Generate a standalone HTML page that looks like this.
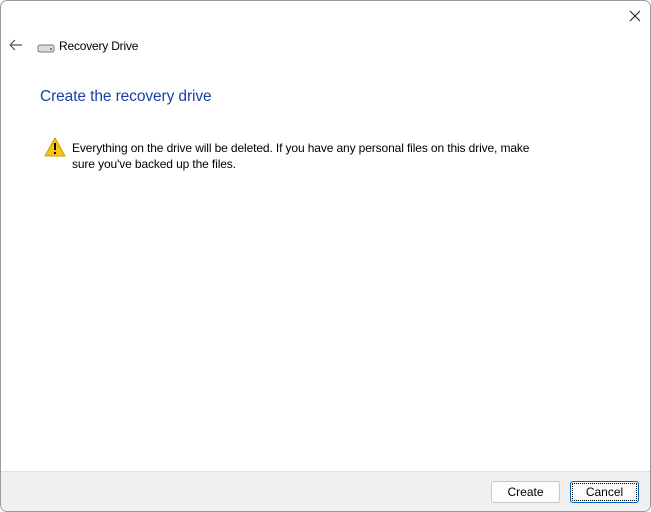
<!DOCTYPE html><html><head><style>
body{margin:0;width:651px;height:512px;overflow:hidden;background:#fff;font-family:"Liberation Sans",sans-serif;}
.win{position:absolute;left:0;top:0;width:649px;height:510px;border:1px solid #9a9a9a;border-radius:7px;background:#fff;overflow:hidden}
.foot{position:absolute;left:0;top:470px;width:100%;height:42px;background:#f0f0f0;border-top:1px solid #dfdfdf}
.btn{position:absolute;top:480px;height:20px;border:1px solid #c8c8c8;border-radius:3px;background:#fdfdfd;font-size:12px;line-height:20px;text-align:center;color:#000}
</style></head><body><div class="win">
<svg style="position:absolute;left:628px;top:9px" width="12" height="12"><path d="M1 1L11 11M11 1L1 11" stroke="#222" stroke-width="1.1"/></svg>
<svg style="position:absolute;left:8px;top:38px" width="14" height="12"><path d="M1 6H13M1 6L6 1M1 6L6 11" stroke="#555" stroke-width="1.2" fill="none"/></svg>
<svg style="position:absolute;left:36px;top:42px" width="18" height="10"><rect x="1" y="2" width="16" height="7" rx="2" fill="#ddd" stroke="#777"/><rect x="13" y="5" width="2" height="2" fill="#3a3"/></svg>
<div style="position:absolute;left:58px;top:38px;font-size:12px;color:#000;letter-spacing:-0.2px">Recovery Drive</div>
<div style="position:absolute;left:39px;top:87px;font-size:15.5px;color:#1a3fa8;letter-spacing:-0.1px">Create the recovery drive</div>
<svg style="position:absolute;left:43px;top:136px" width="22" height="20"><path d="M11 1L21 19H1Z" fill="#f5c518" stroke="#c99a00" stroke-linejoin="round"/><rect x="10" y="6" width="2" height="7" fill="#000"/><rect x="10" y="15" width="2" height="2" fill="#000"/></svg>
<div style="position:absolute;left:71px;top:139px;font-size:12px;line-height:16px;color:#000;width:480px;letter-spacing:-0.12px">Everything on the drive will be deleted. If you have any personal files on this drive, make sure you've backed up the files.</div>
<div class="foot"></div>
<div class="btn" style="left:490px;width:67px">Create</div>
<div class="btn" style="left:569px;width:67px;border:1px solid #0067c0;outline:1px dotted #000;outline-offset:-3px">Cancel</div>
</div></body></html>
